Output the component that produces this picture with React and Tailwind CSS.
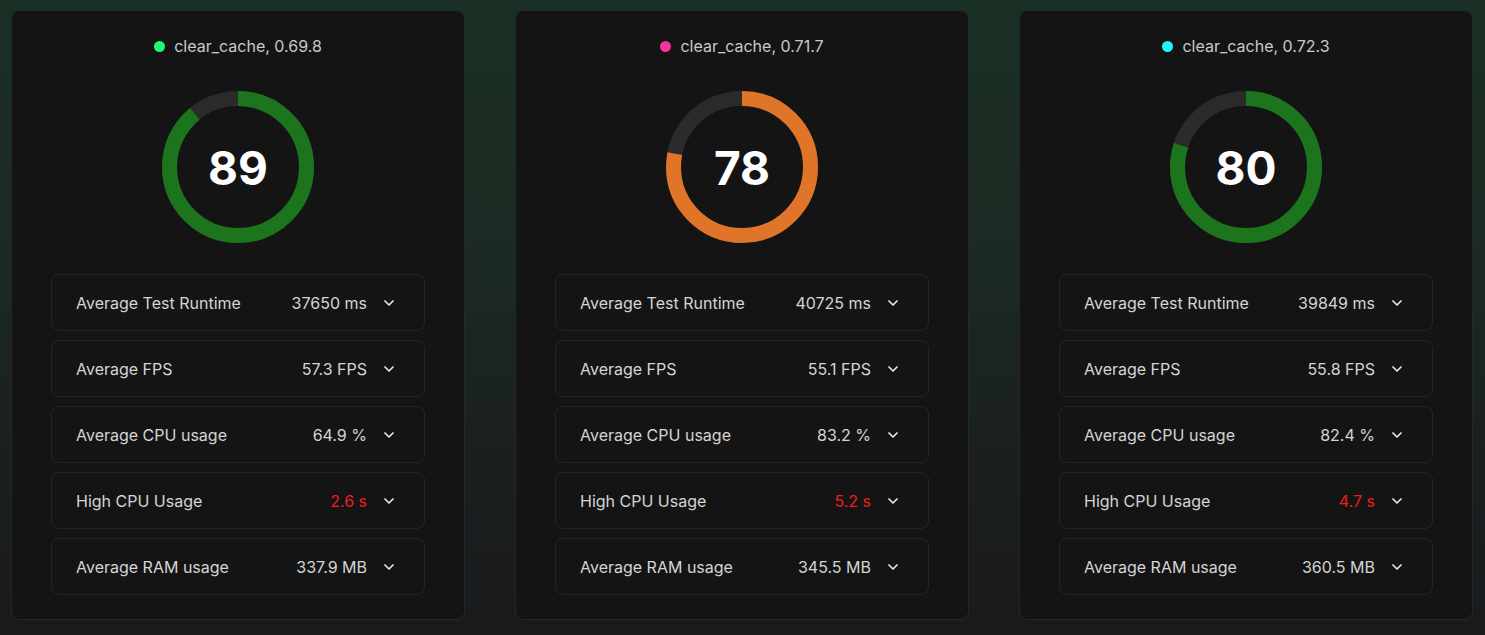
import React from "react";

const cards = [
  {
    dot: "bg-[#22f57a]",
    title: "clear_cache, 0.69.8",
    score: 89,
    color: "#1c741d",
    rows: [
      ["Average Test Runtime", "37650 ms", false],
      ["Average FPS", "57.3 FPS", false],
      ["Average CPU usage", "64.9 %", false],
      ["High CPU Usage", "2.6 s", true],
      ["Average RAM usage", "337.9 MB", false],
    ],
  },
  {
    dot: "bg-[#f5359c]",
    title: "clear_cache, 0.71.7",
    score: 78,
    color: "#e07428",
    rows: [
      ["Average Test Runtime", "40725 ms", false],
      ["Average FPS", "55.1 FPS", false],
      ["Average CPU usage", "83.2 %", false],
      ["High CPU Usage", "5.2 s", true],
      ["Average RAM usage", "345.5 MB", false],
    ],
  },
  {
    dot: "bg-[#22f5f5]",
    title: "clear_cache, 0.72.3",
    score: 80,
    color: "#1c741d",
    rows: [
      ["Average Test Runtime", "39849 ms", false],
      ["Average FPS", "55.8 FPS", false],
      ["Average CPU usage", "82.4 %", false],
      ["High CPU Usage", "4.7 s", true],
      ["Average RAM usage", "360.5 MB", false],
    ],
  },
];

function Gauge({ score, color }) {
  const r = 68.5;
  const c = 2 * Math.PI * r;
  const len = (c * score) / 100;
  return (
    <div className="relative w-[152px] h-[152px]">
      <svg width="152" height="152" viewBox="0 0 152 152">
        <circle cx="76" cy="76" r={r} fill="none" stroke="#2b2b2b" strokeWidth="15" />
        <circle
          cx="76"
          cy="76"
          r={r}
          fill="none"
          stroke={color}
          strokeWidth="15"
          strokeDasharray={`${len} ${c}`}
          transform="rotate(-90 76 76)"
        />
      </svg>
      <div className="absolute inset-0 flex items-center justify-center text-white text-[46px] font-bold leading-none pt-[1px]">
        {score}
      </div>
    </div>
  );
}

function Chevron() {
  return (
    <svg width="16" height="16" viewBox="0 0 24 24" fill="none" stroke="#e5e5e5" strokeWidth="2.6" strokeLinecap="round" strokeLinejoin="round">
      <path d="m6 9 6 6 6-6" />
    </svg>
  );
}

function Card({ card }) {
  return (
    <div className="w-[454px] h-[610px] shrink-0 rounded-[8px] border border-[#222833] bg-[#141414] flex flex-col items-center pt-[25px]">
      <div className="flex items-center gap-[9px] h-[20px]">
        <span className={`w-[11px] h-[11px] rounded-full ${card.dot}`} />
        <span className="text-[16px] text-[#c9c9c9]">{card.title}</span>
      </div>
      <div className="mt-[35px]">
        <Gauge score={card.score} color={card.color} />
      </div>
      <div className="mt-[31px] w-[374px] flex flex-col gap-[9px]">
        {card.rows.map(([label, value, red]) => (
          <div
            key={label}
            className="h-[57px] rounded-[8px] border border-[#1f2530] flex items-center pl-[24px] pr-[27px] text-[16px]"
          >
            <span className="text-[#d4d4d4] flex-1">{label}</span>
            <span className={red ? "text-[#f01c1c]" : "text-[#d4d4d4]"}>{value}</span>
            <span className="ml-[14px] flex items-center">
              <Chevron />
            </span>
          </div>
        ))}
      </div>
    </div>
  );
}

export default function App() {
  return (
    <div
      className="w-[1485px] h-[635px] overflow-hidden flex gap-[50px] pl-[11px] pt-[10px] bg-[linear-gradient(180deg,#1b3024_0%,#1c2b23_35%,#1b1f1e_75%,#1a1a1c_100%)]"
      style={{ fontFamily: "Inter, 'Liberation Sans', sans-serif" }}
    >
      {cards.map((c) => (
        <Card key={c.title} card={c} />
      ))}
    </div>
  );
}
